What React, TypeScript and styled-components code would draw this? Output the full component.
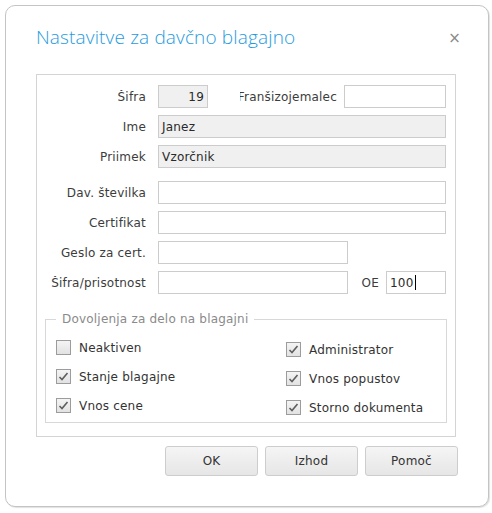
import React from 'react'
import styled, { createGlobalStyle } from 'styled-components'

const GlobalStyle = createGlobalStyle`
  html, body {
    margin: 0;
    padding: 0;
    background: #ffffff;
  }
  body {
    font-family: "DejaVu Sans", Verdana, sans-serif;
    font-size: 12px;
    letter-spacing: 0.2px;
    color: #3a3a3a;
  }
`

const Window = styled.div`
  margin: 5px;
  width: 484px;
  height: 502px;
  box-sizing: border-box;
  border: 1px solid #c4c4c4;
  border-radius: 10px;
  background: #ffffff;
  box-shadow: 1px 1px 1px rgba(0, 0, 0, 0.12);
  display: flex;
  flex-direction: column;
`

const TitleBar = styled.div`
  height: 68px;
  display: flex;
  align-items: center;
  justify-content: space-between;
  padding: 0 27px 0 30px;
`

const Title = styled.h1`
  margin: 0;
  margin-top: -7px;
  font-family: "Open Sans", sans-serif;
  font-weight: 300;
  font-size: 19px;
  letter-spacing: 0.15px;
  color: #1f9be0;
`

const Close = styled.span`
  font-family: "DejaVu Sans", sans-serif;
  font-size: 15px;
  color: #8a8a8a;
  margin-top: -5px;
`

const Panel = styled.div`
  margin-left: 30px;
  width: 420px;
  height: 363px;
  box-sizing: border-box;
  border: 1px solid #d4d4d4;
  padding: 10px 9px 0 0;
  display: flex;
  flex-direction: column;
`

const Rows = styled.div<{ top?: number }>`
  display: flex;
  flex-direction: column;
  gap: 7px;
  margin-top: ${({ top }) => top ?? 0}px;
`

const Row = styled.div`
  display: flex;
  align-items: center;
  height: 23px;
`

const Label = styled.div<{ width?: number, gapBefore?: number }>`
  width: ${({ width }) => width ?? 109}px;
  flex-shrink: 0;
  display: flex;
  justify-content: flex-end;
  overflow: hidden;
  white-space: nowrap;
  margin-left: ${({ gapBefore }) => gapBefore ?? 0}px;
  margin-right: ${({ width }) => (width !== undefined ? 7 : 12)}px;
  color: #3c3c3c;
`

const Field = styled.div<{ width?: number, readOnly?: boolean, right?: boolean }>`
  box-sizing: border-box;
  height: 23px;
  width: ${({ width }) => (width !== undefined ? `${width}px` : 'auto')};
  flex: ${({ width }) => (width !== undefined ? '0 0 auto' : '1')};
  border: 1px solid #cccccc;
  background: ${({ readOnly }) => (readOnly === true ? '#f0f0f0' : '#ffffff')};
  display: flex;
  align-items: center;
  justify-content: ${({ right }) => (right === true ? 'flex-end' : 'flex-start')};
  padding: 0 3px;
  color: #2a2a2a;
  white-space: nowrap;
`

const Caret = styled.span`
  display: inline-block;
  width: 1px;
  height: 15px;
  background: #000000;
  margin-left: 1px;
`

const Permissions = styled.fieldset`
  margin: 18px 0 0 8px;
  height: 111px;
  box-sizing: border-box;
  border: 1px solid #d8d8d8;
  padding: 0 0 0 10px;
  display: flex;
`

const Legend = styled.legend`
  margin-left: 0;
  padding: 0 6px;
  color: #8a8a8a;
`

const Column = styled.div<{ offset?: number, width: number }>`
  width: ${({ width }) => width}px;
  display: flex;
  flex-direction: column;
  gap: 14px;
  padding-top: ${({ offset }) => 14 + (offset ?? 0)}px;
`

const CheckRow = styled.label`
  display: flex;
  align-items: center;
  gap: 8px;
  height: 15px;
  color: #333333;
`

const Box = styled.span`
  width: 15px;
  height: 15px;
  box-sizing: border-box;
  border: 1px solid #9c9c9c;
  background: linear-gradient(#f4f4f4, #e2e2e2);
  display: flex;
  align-items: center;
  justify-content: center;
`

const Buttons = styled.div`
  display: flex;
  gap: 7px;
  justify-content: flex-end;
  margin: 9px 0 0 0;
  padding-right: 30px;
`

const Button = styled.button`
  width: 93px;
  height: 30px;
  box-sizing: border-box;
  border: 1px solid #cdcdcd;
  border-radius: 3px;
  background: linear-gradient(#f5f5f5, #e6e6e6);
  font-family: "DejaVu Sans", sans-serif;
  font-size: 12px;
  letter-spacing: 0.2px;
  color: #333333;
  padding: 0;
`

function Check ({ checked, text }: { checked: boolean, text: string }): React.ReactElement {
  return (
    <CheckRow>
      <Box>
        {checked
          ? (
            <svg width='11' height='11' viewBox='0 0 11 11'>
              <path d='M1.5 6 L4 8.5 L9.5 2' fill='none' stroke='#5e5e5e' strokeWidth='1.6' />
            </svg>
            )
          : null}
      </Box>
      {text}
    </CheckRow>
  )
}

export default function App (): React.ReactElement {
  return (
    <>
      <GlobalStyle />
      <Window>
        <TitleBar>
          <Title>Nastavitve za davčno blagajno</Title>
          <Close>×</Close>
        </TitleBar>
        <Panel>
          <Rows>
            <Row>
              <Label>Šifra</Label>
              <Field width={50} readOnly right>19</Field>
              <Label width={97} gapBefore={32}>Franšizojemalec</Label>
              <Field />
            </Row>
            <Row>
              <Label>Ime</Label>
              <Field readOnly>Janez</Field>
            </Row>
            <Row>
              <Label>Priimek</Label>
              <Field readOnly>Vzorčnik</Field>
            </Row>
          </Rows>
          <Rows top={13}>
            <Row>
              <Label>Dav. številka</Label>
              <Field />
            </Row>
            <Row>
              <Label>Certifikat</Label>
              <Field />
            </Row>
            <Row>
              <Label>Geslo za cert.</Label>
              <Field width={190} />
            </Row>
            <Row>
              <Label>Šifra/prisotnost</Label>
              <Field width={190} />
              <Label width={31}>OE</Label>
              <Field>100<Caret /></Field>
            </Row>
          </Rows>
          <Permissions>
            <Legend>Dovoljenja za delo na blagajni</Legend>
            <Column width={230}>
              <Check checked={false} text='Neaktiven' />
              <Check checked text='Stanje blagajne' />
              <Check checked text='Vnos cene' />
            </Column>
            <Column width={160} offset={2}>
              <Check checked text='Administrator' />
              <Check checked text='Vnos popustov' />
              <Check checked text='Storno dokumenta' />
            </Column>
          </Permissions>
        </Panel>
        <Buttons>
          <Button>OK</Button>
          <Button>Izhod</Button>
          <Button>Pomoč</Button>
        </Buttons>
      </Window>
    </>
  )
}
